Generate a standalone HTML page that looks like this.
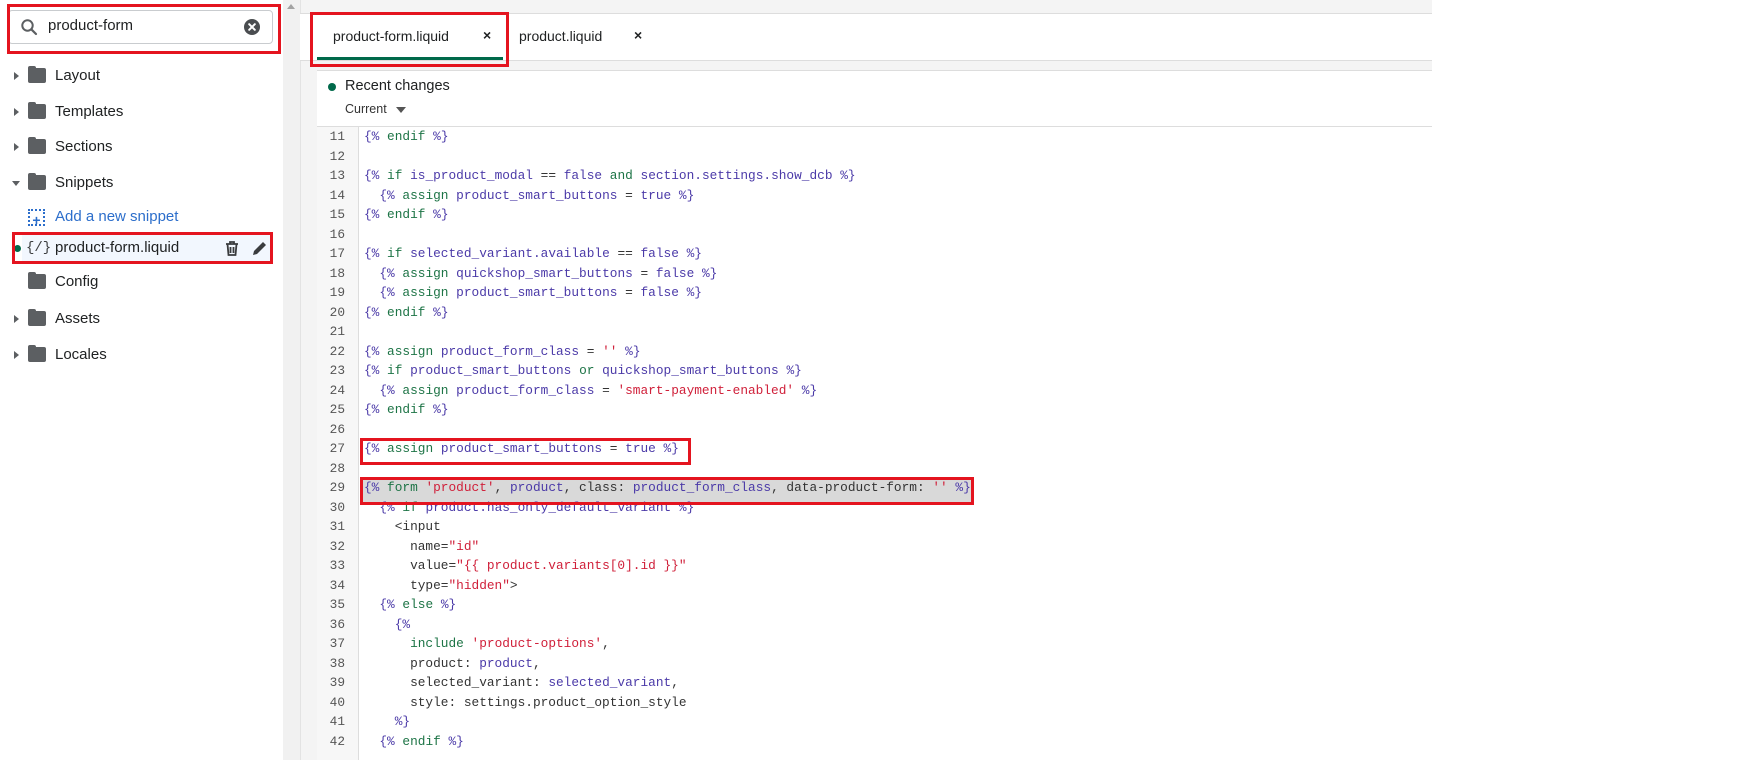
<!DOCTYPE html>
<html><head><meta charset="utf-8"><style>
*{margin:0;padding:0;box-sizing:border-box}
body{width:1742px;height:760px;background:#fff;position:relative;overflow:hidden;font-family:"Liberation Sans",sans-serif;color:#202223}
.abs{position:absolute}
.red{position:absolute;border:3px solid #e4141f}
.item{position:absolute;left:0;height:30px;width:282px;font-size:15px;line-height:30px}
.item .tri{position:absolute;left:14px;top:11px;width:0;height:0;border-top:4px solid transparent;border-bottom:4px solid transparent;border-left:5px solid #5c5f62}
.item .tri.down{left:12px;top:13px;border-left:4px solid transparent;border-right:4px solid transparent;border-top:5px solid #5c5f62;border-bottom:0}
.item .fold{position:absolute;left:28px;top:7px;width:18px;height:15px;background:#5c5f62;border-radius:2px}
.item .fold:before{content:"";position:absolute;left:0;top:-2px;width:8px;height:4px;background:#5c5f62;border-radius:2px 2px 0 0}
.item .t{position:absolute;left:55px}
.code{position:absolute;left:364px;top:127px;font-family:"Liberation Mono",monospace;font-size:12.8px;line-height:19.5px;white-space:pre;color:#333}
.nums{position:absolute;left:317px;width:28px;top:127px;font-family:"Liberation Mono",monospace;font-size:12.8px;line-height:19.5px;text-align:right;color:#555}
.b{color:#4b3aa8}.k{color:#1d7446}.v{color:#4b3aa8}.s{color:#d0203a}
</style></head><body>
<!-- sidebar -->
<div class="abs" style="left:8px;top:10px;width:265px;height:34px;border:1px solid #c9cccf;border-radius:4px"></div>
<svg class="abs" style="left:20px;top:18px" width="18" height="18" viewBox="0 0 18 18"><circle cx="7.5" cy="7.5" r="5.2" fill="none" stroke="#5c5f62" stroke-width="2"/><path d="M11.3 11.3L16 16" stroke="#5c5f62" stroke-width="2.2" stroke-linecap="round"/></svg>
<div class="abs" style="left:48px;top:17px;font-size:15px;color:#202223">product-form</div>
<svg class="abs" style="left:244px;top:19px" width="16" height="16" viewBox="0 0 16 16"><circle cx="8" cy="8" r="8" fill="#4a4d50"/><path d="M5.2 5.2L10.8 10.8M10.8 5.2L5.2 10.8" stroke="#fff" stroke-width="2" stroke-linecap="round"/></svg>
<div class="red" style="left:7px;top:4px;width:274px;height:50px"></div>
<div class="abs" style="left:283px;top:0;width:17px;height:760px;background:#f1f1f1"></div>
<div class="abs" style="left:287px;top:4px;width:0;height:0;border-left:4px solid transparent;border-right:4px solid transparent;border-bottom:5px solid #a3a3a3"></div>

<div class="item" style="top:61px"><div class="tri"></div><div class="fold"></div><div class="t">Layout</div></div>
<div class="item" style="top:97px"><div class="tri"></div><div class="fold"></div><div class="t">Templates</div></div>
<div class="item" style="top:132px"><div class="tri"></div><div class="fold"></div><div class="t">Sections</div></div>
<div class="item" style="top:168px"><div class="tri down"></div><div class="fold"></div><div class="t">Snippets</div></div>
<div class="item" style="top:202px"><div class="abs" style="left:28px;top:7px;width:17px;height:17px;border:2px dotted #2c6ecb"></div><div class="abs" style="left:30px;top:3px;width:13px;text-align:center;color:#2c6ecb;font-weight:bold;font-size:14px">+</div><div class="t" style="color:#2c6ecb">Add a new snippet</div></div>
<div class="abs" style="left:22px;top:235px;width:248px;height:26px;background:#f2f7fe"></div>
<div class="item" style="top:233px"><div class="abs" style="left:14px;top:12px;width:7px;height:7px;border-radius:50%;background:#00694a"></div><div class="abs" style="left:26px;font-family:'Liberation Mono',monospace;font-size:14px;color:#3a3c3e">{/}</div><div class="t">product-form.liquid</div>
<svg class="abs" style="left:224px;top:7px" width="16" height="17" viewBox="0 0 16 17"><path d="M2 4h12M6 4V2h4v2M3.5 4l1 11h7l1-11M6.5 7v6M9.5 7v6" stroke="#3a3c3e" stroke-width="1.8" fill="none"/></svg>
<svg class="abs" style="left:251px;top:7px" width="17" height="17" viewBox="0 0 17 17"><path d="M2 15l1-4L12 2l3 3-9 9z" fill="#3a3c3e"/></svg></div>
<div class="red" style="left:12px;top:232px;width:261px;height:32px"></div>
<div class="item" style="top:267px"><div class="fold"></div><div class="t">Config</div></div>
<div class="item" style="top:304px"><div class="tri"></div><div class="fold"></div><div class="t">Assets</div></div>
<div class="item" style="top:340px"><div class="tri"></div><div class="fold"></div><div class="t">Locales</div></div>

<!-- main -->
<div class="abs" style="left:300px;top:0;width:1132px;height:760px;background:#f4f4f4;border-left:1px solid #e3e3e3"></div>
<div class="abs" style="left:300px;top:13px;width:1132px;height:48px;background:#fff;border-top:1px solid #ddd;border-bottom:1px solid #ddd"></div>
<div class="abs" style="left:317px;top:57px;width:186px;height:3px;background:#00694a"></div>
<div class="abs" style="left:333px;top:28px;font-size:14px;color:#202223">product-form.liquid</div>
<div class="abs" style="left:483px;top:27px;font-size:14px;font-weight:bold">×</div>
<div class="abs" style="left:519px;top:28px;font-size:14px">product.liquid</div>
<div class="abs" style="left:634px;top:27px;font-size:14px;font-weight:bold">×</div>
<div class="red" style="left:310px;top:12px;width:199px;height:55px"></div>

<div class="abs" style="left:317px;top:70px;width:1115px;height:690px;background:#fff;border-top:1px solid #ddd"></div>
<div class="abs" style="left:317px;top:126px;width:1115px;height:1px;background:#ddd"></div>
<div class="abs" style="left:328px;top:83px;width:8px;height:8px;border-radius:50%;background:#00694a"></div>
<div class="abs" style="left:345px;top:78px;font-size:14.5px">Recent changes</div>
<div class="abs" style="left:345px;top:102px;font-size:12.5px;color:#333">Current</div>
<div class="abs" style="left:396px;top:107px;border-left:5px solid transparent;border-right:5px solid transparent;border-top:6px solid #555"></div>

<div class="abs" style="left:317px;top:127px;width:42px;height:633px;background:#f7f7f7;border-right:1px solid #ddd"></div>
<div class="abs" style="left:360px;top:478px;width:612px;height:24px;background:#d9d9d9"></div>
<div class="nums">11<br>12<br>13<br>14<br>15<br>16<br>17<br>18<br>19<br>20<br>21<br>22<br>23<br>24<br>25<br>26<br>27<br>28<br>29<br>30<br>31<br>32<br>33<br>34<br>35<br>36<br>37<br>38<br>39<br>40<br>41<br>42</div>
<div class="code"><span class="b">{%</span> <span class="k">endif</span> <span class="b">%}</span>

<span class="b">{%</span> <span class="k">if</span> <span class="v">is_product_modal</span> == <span class="v">false</span> <span class="k">and</span> <span class="v">section.settings.show_dcb</span> <span class="b">%}</span>
  <span class="b">{%</span> <span class="k">assign</span> <span class="v">product_smart_buttons</span> = <span class="v">true</span> <span class="b">%}</span>
<span class="b">{%</span> <span class="k">endif</span> <span class="b">%}</span>

<span class="b">{%</span> <span class="k">if</span> <span class="v">selected_variant.available</span> == <span class="v">false</span> <span class="b">%}</span>
  <span class="b">{%</span> <span class="k">assign</span> <span class="v">quickshop_smart_buttons</span> = <span class="v">false</span> <span class="b">%}</span>
  <span class="b">{%</span> <span class="k">assign</span> <span class="v">product_smart_buttons</span> = <span class="v">false</span> <span class="b">%}</span>
<span class="b">{%</span> <span class="k">endif</span> <span class="b">%}</span>

<span class="b">{%</span> <span class="k">assign</span> <span class="v">product_form_class</span> = <span class="s">''</span> <span class="b">%}</span>
<span class="b">{%</span> <span class="k">if</span> <span class="v">product_smart_buttons</span> <span class="k">or</span> <span class="v">quickshop_smart_buttons</span> <span class="b">%}</span>
  <span class="b">{%</span> <span class="k">assign</span> <span class="v">product_form_class</span> = <span class="s">'smart-payment-enabled'</span> <span class="b">%}</span>
<span class="b">{%</span> <span class="k">endif</span> <span class="b">%}</span>

<span class="b">{%</span> <span class="k">assign</span> <span class="v">product_smart_buttons</span> = <span class="v">true</span> <span class="b">%}</span>

<span class="b">{%</span> <span class="k">form</span> <span class="s">'product'</span>, <span class="v">product</span>, class: <span class="v">product_form_class</span>, data-product-form: <span class="s">''</span> <span class="b">%}</span>
  <span class="b">{%</span> <span class="k">if</span> <span class="v">product.has_only_default_variant</span> <span class="b">%}</span>
    &lt;input
      name=<span class="s">"id"</span>
      value=<span class="s">"{{ product.variants[0].id }}"</span>
      type=<span class="s">"hidden"</span>&gt;
  <span class="b">{%</span> <span class="k">else</span> <span class="b">%}</span>
    <span class="b">{%</span>
      <span class="k">include</span> <span class="s">'product-options'</span>,
      product: <span class="v">product</span>,
      selected_variant: <span class="v">selected_variant</span>,
      style: settings.product_option_style
    <span class="b">%}</span>
  <span class="b">{%</span> <span class="k">endif</span> <span class="b">%}</span></div>
<div class="red" style="left:360px;top:438px;width:331px;height:27px"></div>
<div class="red" style="left:360px;top:477px;width:614px;height:28px"></div>
</body></html>
